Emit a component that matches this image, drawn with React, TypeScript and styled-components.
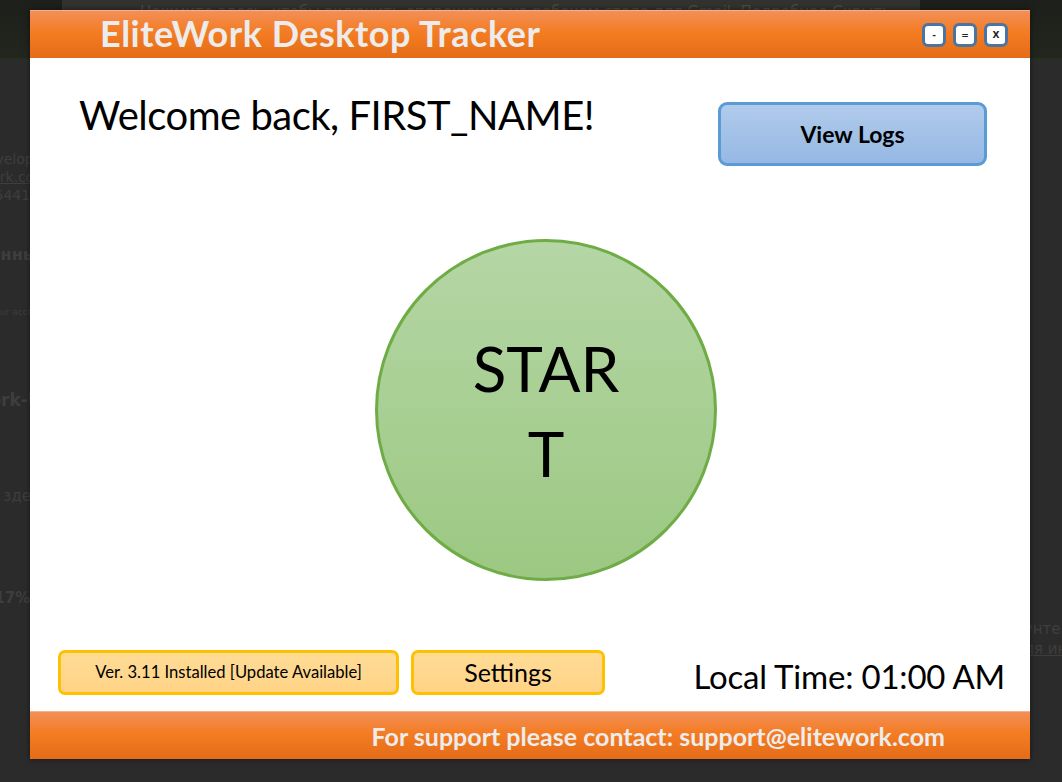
import React from "react";
import styled, { createGlobalStyle } from "styled-components";

const GlobalStyle = createGlobalStyle`
  html, body {
    margin: 0;
    padding: 0;
    background: #2a2a2a;
  }
  body {
    font-family: Lato, "Open Sans", "Liberation Sans", sans-serif;
  }
`;

const Page = styled.div`
  position: relative;
  width: 1062px;
  height: 782px;
  overflow: hidden;
  background: #2b2b2b;
`;

/* dimmed web page behind the tracker window */
const Backdrop = styled.div`
  display: flex;
  flex-direction: column;
  height: 100%;
  font-family: "DejaVu Sans", "Liberation Sans", sans-serif;
  color: #3e3e3e;
`;

const TopStrip = styled.div`
  height: 58px;
  background: linear-gradient(180deg, #1d1f1a 0%, #23251f 100%);
  display: flex;
  padding-left: 62px;
  border-bottom: 2px solid #26301f;
`;

const Notice = styled.div`
  width: 858px;
  height: 24px;
  background: #32322e;
  font-size: 15px;
  line-height: 24px;
  padding-left: 78px;
  box-sizing: border-box;
  color: #4a4a44;
  white-space: nowrap;
  overflow: hidden;
`;

const BackRows = styled.div`
  display: flex;
  justify-content: space-between;
  flex: 1;
`;

const BackColumn = styled.div<{ $align: "left" | "right"; $top: number }>`
  width: 48px;
  display: flex;
  flex-direction: column;
  align-items: ${(p) => (p.$align === "left" ? "flex-start" : "flex-end")};
  padding-top: ${(p) => p.$top}px;
  white-space: nowrap;
  overflow: hidden;
`;

const BackLine = styled.div<{ $gap?: number; $size?: number; $bold?: boolean; $under?: boolean }>`
  flex: none;
  margin-top: ${(p) => p.$gap ?? 0}px;
  font-size: ${(p) => p.$size ?? 14}px;
  font-weight: ${(p) => (p.$bold ? 700 : 400)};
  text-decoration: ${(p) => (p.$under ? "underline" : "none")};
  line-height: 1.3;
`;

const Window = styled.div`
  position: absolute;
  left: 30px;
  top: 10px;
  width: 1000px;
  height: 749px;
  background: #ffffff;
  display: flex;
  flex-direction: column;
  box-shadow: 0 0 6px rgba(0, 0, 0, 0.5);
  font-family: Lato, "Open Sans", "Liberation Sans", sans-serif;
`;

const OrangeBar = styled.div`
  height: 48px;
  flex: none;
  background: linear-gradient(180deg, #f28f58 0%, #f47c22 45%, #e56c18 100%);
  border-top: 1px solid #f7b08a;
  box-sizing: border-box;
  display: flex;
  align-items: center;
  color: #ececec;
  font-weight: 700;
`;

const TitleBar = styled(OrangeBar)`
  padding: 0 22px 0 70px;
  justify-content: space-between;
`;

const Title = styled.div`
  font-size: 36px;
  letter-spacing: 0.5px;
  margin-top: -4px;
`;

const WinButtons = styled.div`
  display: flex;
  gap: 7px;
`;

const WinButton = styled.div`
  width: 24px;
  height: 24px;
  box-sizing: border-box;
  border: 3px solid #4a75a2;
  border-radius: 6px;
  background: #ffffff;
  color: #222;
  font-family: "DejaVu Sans", sans-serif;
  font-size: 9px;
  font-weight: 700;
  display: flex;
  align-items: center;
  justify-content: center;
`;

const Body = styled.div`
  flex: 1;
  display: flex;
  flex-direction: column;
  padding: 0 25px 15px 28px;
`;

const TopRow = styled.div`
  display: flex;
  justify-content: space-between;
  align-items: flex-start;
  padding-top: 33px;
  padding-left: 21px;
  padding-right: 18px;
`;

const Welcome = styled.div`
  font-size: 40px;
  color: #000;
  letter-spacing: -0.5px;
  line-height: 48px;
`;

const ViewLogs = styled.div`
  margin-top: 11px;
  width: 269px;
  height: 64px;
  box-sizing: border-box;
  border: 3px solid #5b9bd5;
  border-radius: 9px;
  background: linear-gradient(180deg, #b1cbeb 0%, #95b8e4 100%);
  display: flex;
  align-items: center;
  justify-content: center;
  font-size: 23px;
  font-weight: 700;
  color: #000;
`;

const Center = styled.div`
  flex: 1;
  display: flex;
  justify-content: center;
  align-items: flex-start;
  padding-top: 73px;
  padding-left: 29px;
`;

const StartButton = styled.div`
  width: 342px;
  height: 342px;
  box-sizing: border-box;
  border-radius: 50%;
  border: 3px solid #6fac46;
  background: linear-gradient(180deg, #b5d6a5 0%, #9cc882 100%);
  display: flex;
  align-items: center;
  justify-content: center;
  text-align: center;
`;

const StartLabel = styled.div`
  width: 160px;
  font-size: 62px;
  line-height: 85px;
  color: #000;
  word-break: break-all;
  margin-top: 2px;
`;

const BottomRow = styled.div`
  display: flex;
  align-items: center;
  gap: 12px;
  padding-top: 3px;
`;

const YellowButton = styled.div<{ $width: number; $size: number }>`
  width: ${(p) => p.$width}px;
  height: 45px;
  box-sizing: border-box;
  border: 3px solid #ffc000;
  border-radius: 7px;
  background: linear-gradient(180deg, #ffdc96 0%, #ffd387 100%);
  display: flex;
  align-items: center;
  justify-content: center;
  font-size: ${(p) => p.$size}px;
  color: #000;
`;

const LocalTime = styled.div`
  margin-left: auto;
  margin-top: 8px;
  font-size: 33px;
  color: #000;
  letter-spacing: -0.2px;
`;

const Footer = styled(OrangeBar)`
  justify-content: flex-end;
  padding-right: 85px;
  font-size: 25px;
  letter-spacing: 0;
`;

export default function App() {
  return (
    <>
      <GlobalStyle />
      <Page>
        <Backdrop>
          <TopStrip>
            <Notice>
              Нажмите здесь, чтобы включить оповещения на рабочем столе для Gmail. Подробнее Скрыть
            </Notice>
          </TopStrip>
          <BackRows>
            <BackColumn $align="right" $top={90}>
              <BackLine>developer</BackLine>
              <BackLine $under>elitework.com</BackLine>
              <BackLine>+7 9544127</BackLine>
              <BackLine $gap={40} $size={16} $bold>
                Личные данные
              </BackLine>
              <BackLine $gap={42} $size={9}>
                Enter your account
              </BackLine>
              <BackLine $gap={70} $size={17} $bold>
                EliteWork-UI
              </BackLine>
              <BackLine $gap={76} $size={15}>
                Нажмите здесь
              </BackLine>
              <BackLine $gap={82} $size={15} $bold>
                (17%) I
              </BackLine>
            </BackColumn>
            <BackColumn $align="left" $top={560}>
              <BackLine $size={15}>пунте:</BackLine>
              <BackLine $size={15} $under>
                для инструкций
              </BackLine>
            </BackColumn>
          </BackRows>
        </Backdrop>

        <Window>
          <TitleBar>
            <Title>EliteWork Desktop Tracker</Title>
            <WinButtons>
              <WinButton>-</WinButton>
              <WinButton>=</WinButton>
              <WinButton>X</WinButton>
            </WinButtons>
          </TitleBar>

          <Body>
            <TopRow>
              <Welcome>Welcome back, FIRST_NAME!</Welcome>
              <ViewLogs>View Logs</ViewLogs>
            </TopRow>

            <Center>
              <StartButton>
                <StartLabel>START</StartLabel>
              </StartButton>
            </Center>

            <BottomRow>
              <YellowButton $width={341} $size={16.6}>
                Ver. 3.11 Installed [Update Available]
              </YellowButton>
              <YellowButton $width={194} $size={25}>
                Settings
              </YellowButton>
              <LocalTime>Local Time: 01:00 AM</LocalTime>
            </BottomRow>
          </Body>

          <Footer>For support please contact: support@elitework.com</Footer>
        </Window>
      </Page>
    </>
  );
}
